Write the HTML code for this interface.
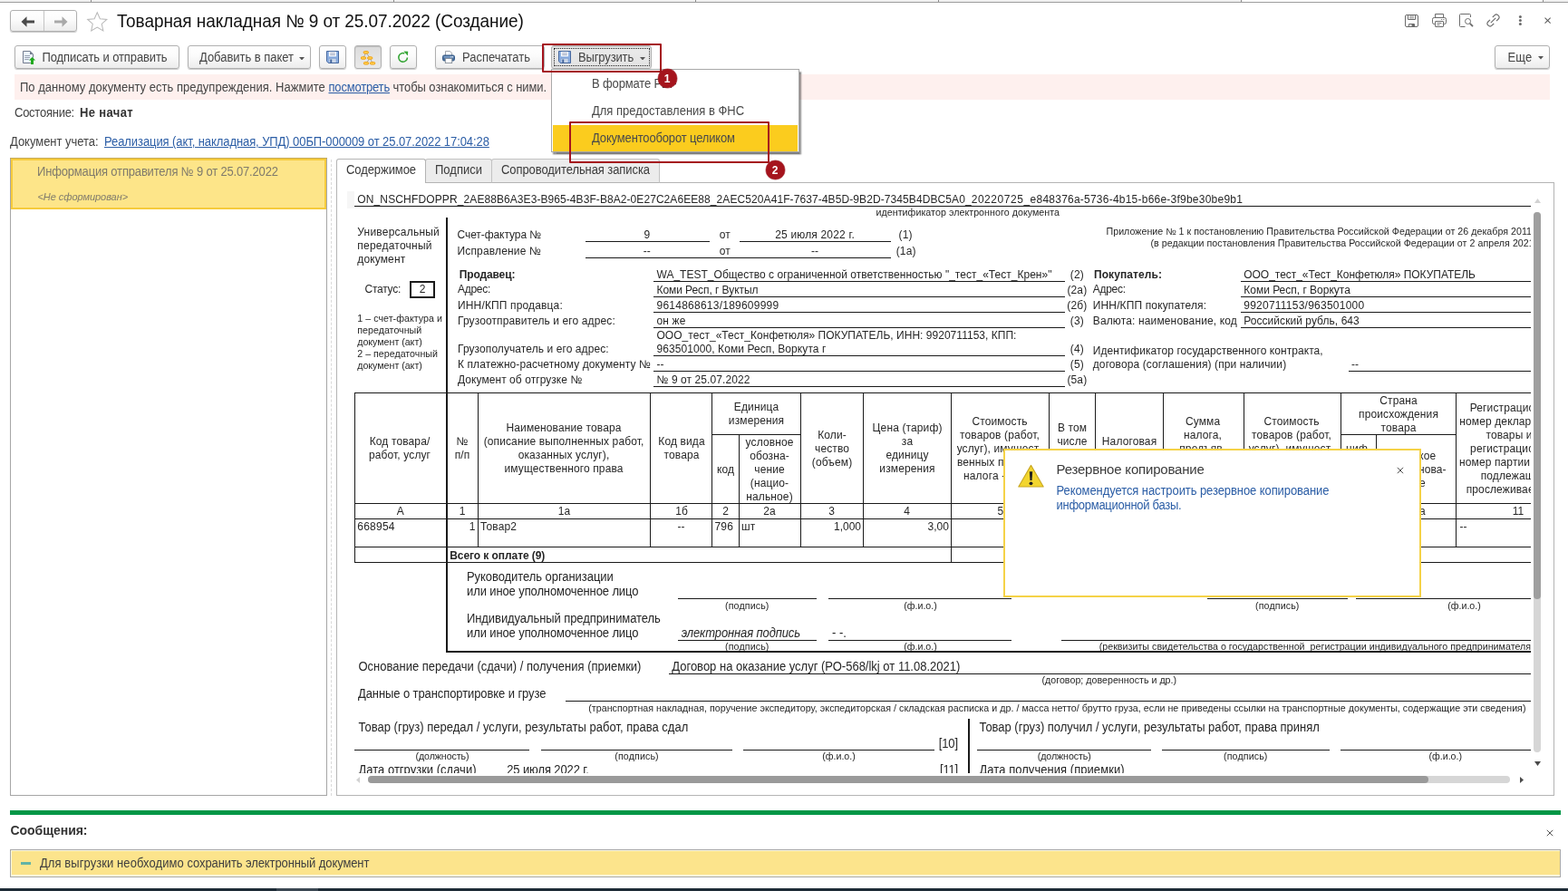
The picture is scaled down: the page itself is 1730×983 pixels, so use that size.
<!DOCTYPE html>
<html lang="ru"><head><meta charset="utf-8">
<title>Товарная накладная № 9 от 25.07.2022 (Создание)</title>
<style>
*{box-sizing:border-box;margin:0;padding:0}
html,body{width:1730px;height:983px;overflow:hidden;background:#fff}
body{position:relative;font-family:"Liberation Sans",sans-serif;font-size:13px;color:#333;-webkit-font-smoothing:antialiased}
div,i,span.t,svg.a,a.t{position:absolute;display:block}
i{font-style:normal}
span.t,a.t{white-space:pre;font-style:normal}

.btn{border:1px solid #b0b0b0;border-radius:3px;background:linear-gradient(#ffffff 0%,#fbfbfb 45%,#ececec 100%);box-shadow:0 1px 1px rgba(0,0,0,.22)}
.btn.on{background:linear-gradient(#dcdcdc,#e9e9e9);box-shadow:inset 0 1px 1px rgba(0,0,0,.15),0 1px 0 rgba(0,0,0,.1)}
.lnk{color:#2c5ea6;text-decoration:underline}
#root{left:0;top:0;width:1730px;height:983px;overflow:hidden;will-change:transform}
#doc{left:391px;top:208px;width:1298px;height:644.5px;overflow:hidden;background:#fff;color:#000}
#doc span.t{color:#262626}

</style></head>
<body>
<div id="root">
<!-- chrome -->
<div style="left:0px;top:0px;width:1730px;height:2px;background:#f1f1f1"></div>
<div style="left:1370px;top:0px;width:332px;height:2px;background:#fff"></div>
<i style="left:0px;top:2px;width:1730px;height:1px;background:#9c9c9c"></i>
<i style="left:100px;top:0px;width:1px;height:2px;background:#8a8a8a"></i>
<i style="left:434px;top:0px;width:1px;height:2px;background:#8a8a8a"></i>
<i style="left:767px;top:0px;width:1px;height:2px;background:#8a8a8a"></i>
<i style="left:1035px;top:0px;width:1px;height:2px;background:#8a8a8a"></i>
<i style="left:1369px;top:0px;width:1px;height:2px;background:#8a8a8a"></i>
<i style="left:1702px;top:0px;width:1px;height:2px;background:#8a8a8a"></i>
<div class="btn" style="left:11px;top:11px;width:74px;height:24px;"></div>
<i style="left:48px;top:12px;width:1px;height:22px;background:#c4c4c4"></i>
<svg class="a" style="left:22.500px;top:17.500px" width="16" height="12" viewBox="0 0 16 12"><path d="M0.5 6L6.5 0.3V4.6H15V7.4H6.5V11.7z" fill="#4a4a4a"/></svg>
<svg class="a" style="left:58.500px;top:17.500px" width="16" height="12" viewBox="0 0 16 12"><path d="M15.5 6L9.5 0.3V4.6H1V7.4H9.5V11.7z" fill="#a9a9a9"/></svg>
<svg class="a" style="left:95px;top:11.500px" width="24.500" height="23.500" viewBox="0 0 26 25"><path d="M13 1.8l3.3 7.4 8 .8-6 5.4 1.7 7.9-7-4.1-7 4.1 1.7-7.9-6-5.400 8-.8z" fill="#fff" stroke="#b9b9b9" stroke-width="1.1" stroke-linejoin="miter"/></svg>
<span class="t" style="letter-spacing:-0.06px;left:129px;top:12px;font-size:19px;line-height:24px;color:#111;transform:scaleY(1.04);transform-origin:0 18px;">Товарная накладная № 9 от 25.07.2022 (Создание)</span>
<!-- toolbar -->
<div class="btn" style="left:16px;top:50px;width:182px;height:26px;"></div>
<svg class="a" style="left:24px;top:55px" width="16" height="17" viewBox="0 0 16 17"><path d="M1.500 1.500h7.700l3.300 3.300v9.700H1.500z" fill="#ebf3fd" stroke="#727b8d" stroke-width="1"/><path d="M9 1.500v3.500h3.500z" fill="#727b8d"/><path d="M3.200 6.500h5.800M3.200 8.500h5.800M3.200 10.500h4.600" stroke="#9099a8" stroke-width=".9"/><path d="M11.500 7.900l3.600 3.500h-2.100v4.600h-3v-4.600h-2.100z" fill="#21a91e" stroke="#ebf7ea" stroke-width=".5" paint-order="stroke"/></svg>
<span class="t" style="letter-spacing:-0.1px;left:46.5px;top:55px;font-size:13px;line-height:17px;color:#454545;transform:scaleY(1.06);transform-origin:0 13px;">Подписать и отправить</span>
<div class="btn" style="left:207px;top:50px;width:136px;height:26px;"></div>
<span class="t" style="letter-spacing:-0.03px;left:220px;top:55px;font-size:13px;line-height:17px;color:#454545;transform:scaleY(1.06);transform-origin:0 13px;">Добавить в пакет</span>
<svg class="a" style="left:329.5px;top:62.5px" width="6" height="3.500" viewBox="0 0 7 4"><path d="M0 0h7L3.5 4z" fill="#555"/></svg>
<div class="btn" style="left:352px;top:50px;width:30px;height:26px;"></div>
<svg class="a" style="left:360px;top:56px" width="14" height="14" viewBox="0 0 14 14"><path d="M0.500 0.500h13v13H2.300L0.500 11.700z" fill="#8db0e2" stroke="#45679e"/><path d="M2.600 7.500h8.800v5.500H2.600z" fill="#7c9fd4"/><rect x="3" y="1" width="8" height="5.300" fill="#fbfdff"/><path d="M4.200 2.600h5.600M4.200 4.500h5.600" stroke="#8c97b6" stroke-width=".9"/><rect x="3.300" y="8.700" width="7.400" height="4.300" fill="#c9d6e8"/><rect x="4.300" y="9.500" width="1.900" height="3.500" fill="#40639a"/></svg>
<div class="btn on" style="left:391px;top:50px;width:30px;height:26px;"></div>
<svg class="a" style="left:398px;top:55.5px" width="17" height="16" viewBox="0 0 17 16"><path d="M5.8 1.8L2.900 8M5.8 1.8L10.200 8M10.200 8L6 13.800M10.200 8L13.100 13.800" stroke="#8f8f8f" stroke-width=".7" fill="none"/><rect x="3.10" y="0.55" width="5.4" height="2.5" rx="1.25" fill="#ffd050" stroke="#f09a00" stroke-width=".85"/><rect x="0.20" y="6.75" width="5.4" height="2.5" rx="1.25" fill="#ffd050" stroke="#f09a00" stroke-width=".85"/><rect x="7.50" y="6.75" width="5.4" height="2.5" rx="1.25" fill="#ffd050" stroke="#f09a00" stroke-width=".85"/><rect x="3.30" y="12.55" width="5.4" height="2.5" rx="1.25" fill="#ffd050" stroke="#f09a00" stroke-width=".85"/><rect x="10.40" y="12.55" width="5.4" height="2.5" rx="1.25" fill="#ffd050" stroke="#f09a00" stroke-width=".85"/></svg>
<div class="btn" style="left:430px;top:50px;width:30px;height:26px;"></div>
<svg class="a" style="left:438px;top:56px" width="14" height="14" viewBox="0 0 14 14"><path d="M11.400 7.400A4.800 4.800 0 1 1 8.300 2.900" fill="none" stroke="#35a535" stroke-width="1.600"/><path d="M7.300 0.600l4.900 0.200-0.300 4.700z" fill="#35a535"/></svg>
<div class="btn" style="left:480px;top:50px;width:121px;height:26px;"></div>
<svg class="a" style="left:488px;top:56px" width="14" height="14" viewBox="0 0 14 14"><path d="M3.5 0.5h5l2 2v3h-7z" fill="#fff" stroke="#8a8f98" stroke-width=".8"/><rect x="0.5" y="5" width="13" height="6" rx="1.6" fill="#49709f" stroke="#365a86"/><rect x="1.6" y="6" width="10.8" height="1.6" fill="#7fa0c8"/><rect x="3.3" y="8.6" width="7.4" height="5" fill="#fff" stroke="#7d8691" stroke-width=".8"/><circle cx="11.2" cy="6.8" r=".7" fill="#fff"/><circle cx="9.4" cy="6.8" r=".6" fill="#dfe8f3"/></svg>
<span class="t" style="left:510px;top:55px;font-size:13px;line-height:17px;color:#454545;transform:scaleY(1.06);transform-origin:0 13px;">Распечатать</span>
<div class="btn on" style="left:608px;top:50px;width:111px;height:26px;background:linear-gradient(#ebebeb,#e2e2e2)"></div>
<div style="left:611px;top:53px;width:106px;height:20px;border:1px dotted #222"></div>
<svg class="a" style="left:616px;top:56px" width="14" height="14" viewBox="0 0 14 14"><path d="M0.500 0.500h13v13H2.300L0.500 11.700z" fill="#8db0e2" stroke="#45679e"/><path d="M2.600 7.500h8.800v5.500H2.600z" fill="#7c9fd4"/><rect x="3" y="1" width="8" height="5.300" fill="#fbfdff"/><path d="M4.200 2.600h5.600M4.200 4.500h5.600" stroke="#8c97b6" stroke-width=".9"/><rect x="3.300" y="8.700" width="7.400" height="4.300" fill="#c9d6e8"/><rect x="4.300" y="9.500" width="1.900" height="3.500" fill="#40639a"/></svg>
<span class="t" style="letter-spacing:-0.14px;left:638px;top:55px;font-size:13px;line-height:17px;color:#454545;transform:scaleY(1.06);transform-origin:0 13px;">Выгрузить</span>
<svg class="a" style="left:706.3px;top:62.8px" width="6" height="3.500" viewBox="0 0 7 4"><path d="M0 0h7L3.5 4z" fill="#555"/></svg>
<div class="btn" style="left:1649px;top:50px;width:61px;height:26px;"></div>
<span class="t" style="letter-spacing:0.18px;left:1663.5px;top:55px;font-size:13px;line-height:17px;color:#454545;transform:scaleY(1.06);transform-origin:0 13px;">Еще</span>
<svg class="a" style="left:1697px;top:62.3px" width="6" height="3.500" viewBox="0 0 7 4"><path d="M0 0h7L3.5 4z" fill="#555"/></svg>
<svg class="a" style="left:1550px;top:16px" width="15" height="14" viewBox="0 0 15 14" fill="none" stroke="#6b6b6b" stroke-width="1"><rect x=".5" y=".5" width="14" height="13" rx="1.500"/><path d="M3.500 .5v5h8v-5"/><path d="M5 2h5M5 3.900h5" stroke-width=".8"/><path d="M4.500 13.500v-3h6v3"/><rect x="7.500" y="11" width="3" height="2.500" fill="#6b6b6b" stroke="none"/></svg>
<svg class="a" style="left:1580px;top:15px" width="16" height="15" viewBox="0 0 16 15" fill="none" stroke="#6b6b6b" stroke-width="1"><path d="M3.500 4.500v-4h9v4"/><rect x=".5" y="4.500" width="15" height="7" rx="1.800"/><rect x="3.500" y="8.500" width="9" height="6" rx=".5" fill="#fff"/><path d="M5.500 10.500h5M5.500 12.500h3" stroke-width=".9"/><path d="M10 6.500h1.200M12.300 6.500h1.200" stroke-width=".9"/></svg>
<svg class="a" style="left:1610px;top:15px" width="16" height="15" viewBox="0 0 16 15" fill="none" stroke="#6b6b6b" stroke-width="1"><path d="M12.500 4v-2.500a1 1 0 0 0-1-1h-10a1 1 0 0 0-1 1v12a1 1 0 0 0 1 1h5"/><circle cx="9.500" cy="8.500" r="3"/><path d="M11.800 10.900l3.200 3.300" stroke-width="1.800"/></svg>
<svg class="a" style="left:1640px;top:15px" width="15" height="15" viewBox="0 0 15 15" fill="none" stroke="#6b6b6b" stroke-width="1.150"><path d="M6.800 4l2.200-2.200a2.700 2.700 0 0 1 3.800 0l.4 .4a2.700 2.700 0 0 1 0 3.800l-2.200 2.200"/><path d="M8.200 11l-2.200 2.200a2.700 2.700 0 0 1-3.800 0l-.4-.4a2.700 2.700 0 0 1 0-3.800l2.200-2.200"/><path d="M4.800 10.200l5.400-5.400"/></svg>
<svg class="a" style="left:1674px;top:16px" width="7" height="13" viewBox="0 0 7 13" fill="#6b6b6b"><circle cx="3.400" cy="2.400" r="1.500"/><circle cx="3.400" cy="6.400" r="1.500"/><circle cx="3.400" cy="10.500" r="1.500"/></svg>
<svg class="a" style="left:1704px;top:18.800px" width="7.200" height="7.200" viewBox="0 0 8 8"><path d="M.6 .6l6.800 6.800M7.400 .6l-6.800 6.800" stroke="#5a5a5a" stroke-width="1.150" fill="none"/></svg>
<div style="left:16px;top:82px;width:1694px;height:27.5px;background:#fef0ee"></div>
<span class="t" style="letter-spacing:0.02px;left:22px;top:88px;font-size:13px;line-height:17px;color:#454545;transform:scaleY(1.06);transform-origin:0 13px;">По данному документу есть предупреждения. Нажмите </span>
<span class="t" style="letter-spacing:-0.19px;left:362.5px;top:88px;font-size:13px;line-height:17px;transform:scaleY(1.06);transform-origin:0 13px;"><span class="lnk">посмотреть</span></span>
<span class="t" style="letter-spacing:-0.06px;left:433.5px;top:88px;font-size:13px;line-height:17px;color:#454545;transform:scaleY(1.06);transform-origin:0 13px;">чтобы ознакомиться с ними.</span>
<span class="t" style="letter-spacing:-0.25px;left:16px;top:116px;font-size:13px;line-height:17px;color:#444;transform:scaleY(1.06);transform-origin:0 13px;">Состояние:</span>
<span class="t" style="letter-spacing:0.36px;left:88px;top:116px;font-size:13px;line-height:17px;font-weight:bold;color:#333;transform:scaleY(1.06);transform-origin:0 13px;">Не начат</span>
<span class="t" style="letter-spacing:-0.03px;left:11px;top:148px;font-size:13px;line-height:17px;color:#444;transform:scaleY(1.06);transform-origin:0 13px;">Документ учета:</span>
<span class="t" style="letter-spacing:-0.08px;left:115px;top:148px;font-size:13px;line-height:17px;transform:scaleY(1.06);transform-origin:0 13px;"><span class="lnk">Реализация (акт, накладная, УПД) 00БП-000009 от 25.07.2022 17:04:28</span></span>
<!-- panels -->
<div style="left:11px;top:174px;width:350px;height:704px;border:1px solid #a6a6a6;background:#fff"></div>
<div style="left:12px;top:175px;width:348px;height:55.5px;background:#fde589;border:2px solid #f6cb3c"></div>
<i style="left:11px;top:174px;width:350px;height:1px;background:#c6aa55"></i>
<span class="t" style="letter-spacing:-0.17px;left:41px;top:181px;font-size:13px;line-height:17px;color:#807b6c;transform:scaleY(1.06);transform-origin:0 13px;">Информация отправителя № 9 от 25.07.2022</span>
<span class="t" style="letter-spacing:-0.06px;left:41.5px;top:210px;font-size:11px;line-height:14px;font-style:italic;color:#807b6c;">&lt;Не сформирован&gt;</span>
<div style="left:365px;top:176px;width:1px;height:702px;border-left:1px dashed #d9d9d9"></div>
<div style="left:371px;top:201px;width:1344px;height:677px;border:1px solid #b4b4b4;background:#fff"></div>
<div style="left:469px;top:175px;width:74px;height:27px;border:1px solid #c3c3c3;border-bottom-color:#b4b4b4;border-radius:3px 3px 0 0;background:#ececec"></div>
<div style="left:542px;top:175px;width:186px;height:27px;border:1px solid #c3c3c3;border-bottom-color:#b4b4b4;border-radius:3px 3px 0 0;background:#ececec"></div>
<div style="left:371px;top:175px;width:99px;height:27px;border:1px solid #b4b4b4;border-bottom:none;border-radius:3px 3px 0 0;background:#fff"></div>
<span class="t" style="letter-spacing:-0.07px;left:382px;top:179px;font-size:13px;line-height:17px;color:#3b3b3b;transform:scaleY(1.06);transform-origin:0 13px;">Содержимое</span>
<span class="t" style="letter-spacing:0.009px;left:480px;top:179px;font-size:13px;line-height:17px;color:#3b3b3b;transform:scaleY(1.06);transform-origin:0 13px;">Подписи</span>
<span class="t" style="letter-spacing:-0.08px;left:553px;top:179px;font-size:13px;line-height:17px;color:#3b3b3b;transform:scaleY(1.06);transform-origin:0 13px;">Сопроводительная записка</span>
<div style="left:383px;top:211px;width:11px;height:19px;background:#f6f6f6"></div>
<svg class="a" style="left:1693px;top:219px" width="7" height="5" viewBox="0 0 7 5"><path d="M0 5h7L3.500 0z" fill="#d2d2d2"/></svg>
<div style="left:1692px;top:233.5px;width:8px;height:596px;background:#d6d6d6;border-radius:4px"></div>
<div style="left:1692px;top:233.5px;width:8px;height:427px;background:#9f9f9f;border-radius:4px"></div>
<svg class="a" style="left:1693px;top:839.500px" width="7" height="5" viewBox="0 0 7 5"><path d="M0 0h7L3.500 5z" fill="#4a4a4a"/></svg>
<svg class="a" style="left:392.500px;top:856.500px" width="4" height="7" viewBox="0 0 4 7"><path d="M4 0v7L0 3.500z" fill="#d2d2d2"/></svg>
<div style="left:405.5px;top:856px;width:1260.5px;height:8px;background:#d6d6d6;border-radius:4px"></div>
<div style="left:405.5px;top:856px;width:1170.5px;height:8px;background:#9a9a9a;border-radius:4px"></div>
<svg class="a" style="left:1676.500px;top:856.500px" width="4" height="7" viewBox="0 0 4 7"><path d="M0 0v7l4-3.500z" fill="#4a4a4a"/></svg>
<!-- doc -->
<div id="doc"><div style="left:-391px;top:-208px;width:1730px;height:983px">
<span class="t" style="left:394.25px;top:213px;font-size:12px;line-height:15px;transform:scaleY(1.04);transform-origin:0 11px;"><span style="letter-spacing:0.14px">ON_NSCHFDOPPR_</span><span style="letter-spacing:0.07px">2AE88B6A3E3-B965-4B3F-B8A2-0E27C2A6EE88_</span><span style="letter-spacing:0.09px">2AEC520A41F-7637-4B5D-9B2D-7345B4DBC5A0_</span><span style="letter-spacing:0.54px">20220725_</span><span style="letter-spacing:0.23px">e848376a-5736-4b15-b66e-3f9be30be9b1</span></span>
<i style="left:391px;top:227px;width:1298px;height:1px;background:#1a1a1a"></i>
<span class="t" style="letter-spacing:0.05px;left:767.77px;width:600px;text-align:center;top:226.5px;font-size:10.67px;line-height:15px;transform:scaleY(0.95);transform-origin:50% 11px;">идентификатор электронного документа</span>
<span class="t" style="letter-spacing:0.02px;left:1220.5px;top:248px;font-size:10.67px;line-height:15px;transform:scaleY(0.95);transform-origin:0 11px;">Приложение № 1 к постановлению Правительства Российской Федерации от 26 декабря 2011</span>
<span class="t" style="letter-spacing:0.04px;left:1269.5px;top:261px;font-size:10.67px;line-height:15px;transform:scaleY(0.95);transform-origin:0 11px;">(в редакции постановления Правительства Российской Федерации от 2 апреля 2021</span>
<span class="t" style="letter-spacing:0.22px;left:394.25px;top:249px;font-size:12px;line-height:15px;transform:scaleY(1.04);transform-origin:0 11px;">Универсальный</span>
<span class="t" style="letter-spacing:0.24px;left:394.25px;top:264px;font-size:12px;line-height:15px;transform:scaleY(1.04);transform-origin:0 11px;">передаточный</span>
<span class="t" style="letter-spacing:0.13px;left:394.25px;top:279px;font-size:12px;line-height:15px;transform:scaleY(1.04);transform-origin:0 11px;">документ</span>
<span class="t" style="letter-spacing:-0.25px;left:402.5px;top:312px;font-size:12px;line-height:15px;transform:scaleY(1.04);transform-origin:0 11px;">Статус:</span>
<div style="left:452px;top:310px;width:28px;height:19px;border:2px solid #1a1a1a"></div>
<span class="t" style="letter-spacing:0.12px;left:166.06px;width:600px;text-align:center;top:312px;font-size:12px;line-height:15px;transform:scaleY(1.04);transform-origin:50% 11px;">2</span>
<span class="t" style="letter-spacing:0.04px;left:394.25px;top:344px;font-size:10.67px;line-height:15px;transform:scaleY(0.95);transform-origin:0 11px;">1 – счет-фактура и</span>
<span class="t" style="letter-spacing:0.02px;left:394.25px;top:357px;font-size:10.67px;line-height:15px;transform:scaleY(0.95);transform-origin:0 11px;">передаточный</span>
<span class="t" style="letter-spacing:-0.02px;left:394.25px;top:370px;font-size:10.67px;line-height:15px;transform:scaleY(0.95);transform-origin:0 11px;">документ (акт)</span>
<span class="t" style="letter-spacing:0.01px;left:394.25px;top:383px;font-size:10.67px;line-height:15px;transform:scaleY(0.95);transform-origin:0 11px;">2 – передаточный</span>
<span class="t" style="letter-spacing:-0.02px;left:394.25px;top:396px;font-size:10.67px;line-height:15px;transform:scaleY(0.95);transform-origin:0 11px;">документ (акт)</span>
<i style="left:492px;top:240px;width:2px;height:480px;background:#1a1a1a"></i>
<i style="left:492px;top:718px;width:1197px;height:2px;background:#1a1a1a"></i>
<span class="t" style="letter-spacing:-0.07px;left:504.5px;top:251.5px;font-size:12px;line-height:15px;transform:scaleY(1.04);transform-origin:0 11px;">Счет-фактура №</span>
<span class="t" style="letter-spacing:0.16px;left:504.5px;top:270px;font-size:12px;line-height:15px;transform:scaleY(1.04);transform-origin:0 11px;">Исправление №</span>
<i style="left:646px;top:266px;width:136.5px;height:1px;background:#1a1a1a"></i>
<i style="left:816px;top:266px;width:167px;height:1px;background:#1a1a1a"></i>
<i style="left:646px;top:284px;width:337px;height:1px;background:#1a1a1a"></i>
<span class="t" style="letter-spacing:0.12px;left:413.81px;width:600px;text-align:center;top:251.5px;font-size:12px;line-height:15px;transform:scaleY(1.04);transform-origin:50% 11px;">9</span>
<span class="t" style="letter-spacing:0.12px;left:413.81px;width:600px;text-align:center;top:270px;font-size:12px;line-height:15px;transform:scaleY(1.04);transform-origin:50% 11px;">--</span>
<span class="t" style="letter-spacing:0.12px;left:793.75px;top:251.5px;font-size:12px;line-height:15px;transform:scaleY(1.04);transform-origin:0 11px;">от</span>
<span class="t" style="letter-spacing:0.12px;left:793.75px;top:270px;font-size:12px;line-height:15px;transform:scaleY(1.04);transform-origin:0 11px;">от</span>
<span class="t" style="letter-spacing:0.17px;left:599.08px;width:600px;text-align:center;top:251.5px;font-size:12px;line-height:15px;transform:scaleY(1.04);transform-origin:50% 11px;">25 июля 2022 г.</span>
<span class="t" style="letter-spacing:0.12px;left:599.06px;width:600px;text-align:center;top:270px;font-size:12px;line-height:15px;transform:scaleY(1.04);transform-origin:50% 11px;">--</span>
<span class="t" style="letter-spacing:0.12px;left:699.06px;width:600px;text-align:center;top:251.5px;font-size:12px;line-height:15px;transform:scaleY(1.04);transform-origin:50% 11px;">(1)</span>
<span class="t" style="letter-spacing:0.12px;left:699.66px;width:600px;text-align:center;top:270px;font-size:12px;line-height:15px;transform:scaleY(1.04);transform-origin:50% 11px;">(1а)</span>
<span class="t" style="letter-spacing:-0.13px;left:506.75px;top:296px;font-size:12px;line-height:15px;font-weight:bold;transform:scaleY(1.04);transform-origin:0 11px;">Продавец:</span>
<span class="t" style="letter-spacing:-0.28px;left:505px;top:312px;font-size:12px;line-height:15px;transform:scaleY(1.04);transform-origin:0 11px;">Адрес:</span>
<span class="t" style="letter-spacing:0.15px;left:505px;top:330px;font-size:12px;line-height:15px;transform:scaleY(1.04);transform-origin:0 11px;">ИНН/КПП продавца:</span>
<span class="t" style="letter-spacing:0.11px;left:505px;top:347px;font-size:12px;line-height:15px;transform:scaleY(1.04);transform-origin:0 11px;">Грузоотправитель и его адрес:</span>
<span class="t" style="letter-spacing:0.08px;left:505px;top:378px;font-size:12px;line-height:15px;transform:scaleY(1.04);transform-origin:0 11px;">Грузополучатель и его адрес:</span>
<span class="t" style="letter-spacing:0.09px;left:505px;top:395px;font-size:12px;line-height:15px;transform:scaleY(1.04);transform-origin:0 11px;">К платежно-расчетному документу №</span>
<span class="t" style="letter-spacing:0.06px;left:505px;top:412px;font-size:12px;line-height:15px;transform:scaleY(1.04);transform-origin:0 11px;">Документ об отгрузке №</span>
<span class="t" style="letter-spacing:0.02px;left:724.5px;top:296px;font-size:12px;line-height:15px;transform:scaleY(1.04);transform-origin:0 11px;">WA_TEST_Общество с ограниченной ответственностью "_тест_«Тест_Крен»"</span>
<span class="t" style="letter-spacing:-0.07px;left:724.5px;top:313px;font-size:12px;line-height:15px;transform:scaleY(1.04);transform-origin:0 11px;">Коми Респ, г Вуктыл</span>
<span class="t" style="letter-spacing:0.24px;left:724.5px;top:330px;font-size:12px;line-height:15px;transform:scaleY(1.04);transform-origin:0 11px;">9614868613/189609999</span>
<span class="t" style="letter-spacing:0.12px;left:724.5px;top:347px;font-size:12px;line-height:15px;transform:scaleY(1.04);transform-origin:0 11px;">он же</span>
<span class="t" style="letter-spacing:0.03px;left:724.5px;top:363px;font-size:12px;line-height:15px;transform:scaleY(1.04);transform-origin:0 11px;">ООО_тест_«Тест_Конфетюля» ПОКУПАТЕЛЬ, ИНН: 9920711153, КПП:</span>
<span class="t" style="letter-spacing:0.08px;left:724.5px;top:378px;font-size:12px;line-height:15px;transform:scaleY(1.04);transform-origin:0 11px;">963501000, Коми Респ, Воркута г</span>
<span class="t" style="letter-spacing:0.12px;left:724.5px;top:395px;font-size:12px;line-height:15px;transform:scaleY(1.04);transform-origin:0 11px;">--</span>
<span class="t" style="letter-spacing:0.09px;left:724.5px;top:412px;font-size:12px;line-height:15px;transform:scaleY(1.04);transform-origin:0 11px;">№ 9 от 25.07.2022</span>
<i style="left:721px;top:310px;width:453.5px;height:1px;background:#1a1a1a"></i>
<i style="left:721px;top:327px;width:453.5px;height:1px;background:#1a1a1a"></i>
<i style="left:721px;top:344px;width:453.5px;height:1px;background:#1a1a1a"></i>
<i style="left:721px;top:361px;width:453.5px;height:1px;background:#1a1a1a"></i>
<i style="left:721px;top:392px;width:453.5px;height:1px;background:#1a1a1a"></i>
<i style="left:721px;top:409px;width:453.5px;height:1px;background:#1a1a1a"></i>
<i style="left:721px;top:426px;width:453.5px;height:1px;background:#1a1a1a"></i>
<span class="t" style="letter-spacing:0.12px;left:888.36px;width:600px;text-align:center;top:296px;font-size:12px;line-height:15px;transform:scaleY(1.04);transform-origin:50% 11px;">(2)</span>
<span class="t" style="letter-spacing:0.12px;left:888.36px;width:600px;text-align:center;top:313px;font-size:12px;line-height:15px;transform:scaleY(1.04);transform-origin:50% 11px;">(2а)</span>
<span class="t" style="letter-spacing:0.12px;left:888.36px;width:600px;text-align:center;top:330px;font-size:12px;line-height:15px;transform:scaleY(1.04);transform-origin:50% 11px;">(2б)</span>
<span class="t" style="letter-spacing:0.12px;left:888.36px;width:600px;text-align:center;top:347px;font-size:12px;line-height:15px;transform:scaleY(1.04);transform-origin:50% 11px;">(3)</span>
<span class="t" style="letter-spacing:0.12px;left:888.36px;width:600px;text-align:center;top:378px;font-size:12px;line-height:15px;transform:scaleY(1.04);transform-origin:50% 11px;">(4)</span>
<span class="t" style="letter-spacing:0.12px;left:888.36px;width:600px;text-align:center;top:395px;font-size:12px;line-height:15px;transform:scaleY(1.04);transform-origin:50% 11px;">(5)</span>
<span class="t" style="letter-spacing:0.12px;left:888.36px;width:600px;text-align:center;top:412px;font-size:12px;line-height:15px;transform:scaleY(1.04);transform-origin:50% 11px;">(5а)</span>
<span class="t" style="letter-spacing:0.08px;left:1207px;top:296px;font-size:12px;line-height:15px;font-weight:bold;transform:scaleY(1.04);transform-origin:0 11px;">Покупатель:</span>
<span class="t" style="letter-spacing:-0.28px;left:1205.75px;top:312px;font-size:12px;line-height:15px;transform:scaleY(1.04);transform-origin:0 11px;">Адрес:</span>
<span class="t" style="letter-spacing:0.14px;left:1205.75px;top:330px;font-size:12px;line-height:15px;transform:scaleY(1.04);transform-origin:0 11px;">ИНН/КПП покупателя:</span>
<span class="t" style="letter-spacing:0.14px;left:1205.75px;top:347px;font-size:12px;line-height:15px;transform:scaleY(1.04);transform-origin:0 11px;">Валюта: наименование, код</span>
<span class="t" style="letter-spacing:0.07px;left:1205.75px;top:379.5px;font-size:12px;line-height:15px;transform:scaleY(1.04);transform-origin:0 11px;">Идентификатор государственного контракта,</span>
<span class="t" style="letter-spacing:0.1px;left:1205.75px;top:395px;font-size:12px;line-height:15px;transform:scaleY(1.04);transform-origin:0 11px;">договора (соглашения) (при наличии)</span>
<span class="t" style="letter-spacing:-0.03px;left:1372.25px;top:296px;font-size:12px;line-height:15px;transform:scaleY(1.04);transform-origin:0 11px;">ООО_тест_«Тест_Конфетюля» ПОКУПАТЕЛЬ</span>
<span class="t" style="letter-spacing:-0.01px;left:1372.25px;top:313px;font-size:12px;line-height:15px;transform:scaleY(1.04);transform-origin:0 11px;">Коми Респ, г Воркута</span>
<span class="t" style="letter-spacing:0.24px;left:1372.25px;top:330px;font-size:12px;line-height:15px;transform:scaleY(1.04);transform-origin:0 11px;">9920711153/963501000</span>
<span class="t" style="letter-spacing:0.05px;left:1372.25px;top:347px;font-size:12px;line-height:15px;transform:scaleY(1.04);transform-origin:0 11px;">Российский рубль, 643</span>
<span class="t" style="letter-spacing:0.12px;left:1491px;top:395px;font-size:12px;line-height:15px;transform:scaleY(1.04);transform-origin:0 11px;">--</span>
<i style="left:1369px;top:310px;width:320px;height:1px;background:#1a1a1a"></i>
<i style="left:1369px;top:327px;width:320px;height:1px;background:#1a1a1a"></i>
<i style="left:1369px;top:344px;width:320px;height:1px;background:#1a1a1a"></i>
<i style="left:1369px;top:361px;width:320px;height:1px;background:#1a1a1a"></i>
<i style="left:1488px;top:409px;width:201px;height:1px;background:#1a1a1a"></i>
<i style="left:391px;top:433px;width:1298px;height:1px;background:#1a1a1a"></i>
<i style="left:391px;top:555px;width:1298px;height:1px;background:#1a1a1a"></i>
<i style="left:391px;top:572px;width:1298px;height:1px;background:#1a1a1a"></i>
<i style="left:391px;top:603px;width:1298px;height:1px;background:#1a1a1a"></i>
<i style="left:391px;top:620px;width:1298px;height:1px;background:#1a1a1a"></i>
<i style="left:391px;top:433px;width:1px;height:187px;background:#1a1a1a"></i>
<i style="left:527px;top:433px;width:1px;height:170px;background:#1a1a1a"></i>
<i style="left:717px;top:433px;width:1px;height:170px;background:#1a1a1a"></i>
<i style="left:785px;top:433px;width:1px;height:170px;background:#1a1a1a"></i>
<i style="left:883px;top:433px;width:1px;height:170px;background:#1a1a1a"></i>
<i style="left:952px;top:433px;width:1px;height:170px;background:#1a1a1a"></i>
<i style="left:1157px;top:433px;width:1px;height:170px;background:#1a1a1a"></i>
<i style="left:1208px;top:433px;width:1px;height:170px;background:#1a1a1a"></i>
<i style="left:1283px;top:433px;width:1px;height:170px;background:#1a1a1a"></i>
<i style="left:1372px;top:433px;width:1px;height:170px;background:#1a1a1a"></i>
<i style="left:1479px;top:433px;width:1px;height:170px;background:#1a1a1a"></i>
<i style="left:1606px;top:433px;width:1px;height:170px;background:#1a1a1a"></i>
<i style="left:1049px;top:433px;width:1px;height:187px;background:#1a1a1a"></i>
<i style="left:1157px;top:603px;width:1px;height:17px;background:#1a1a1a"></i>
<i style="left:1283px;top:603px;width:1px;height:17px;background:#1a1a1a"></i>
<i style="left:1372px;top:603px;width:1px;height:17px;background:#1a1a1a"></i>
<i style="left:1479px;top:603px;width:1px;height:17px;background:#1a1a1a"></i>
<i style="left:815px;top:479px;width:1px;height:124px;background:#1a1a1a"></i>
<i style="left:1518px;top:479px;width:1px;height:124px;background:#1a1a1a"></i>
<i style="left:785px;top:479px;width:99px;height:1px;background:#1a1a1a"></i>
<i style="left:1479px;top:479px;width:128px;height:1px;background:#1a1a1a"></i>
<span class="t" style="letter-spacing:0.12px;left:141.06px;width:600px;text-align:center;top:480px;font-size:12px;line-height:15px;transform:scaleY(1.04);transform-origin:50% 11px;">Код товара/</span>
<span class="t" style="letter-spacing:0.12px;left:141.06px;width:600px;text-align:center;top:495px;font-size:12px;line-height:15px;transform:scaleY(1.04);transform-origin:50% 11px;">работ, услуг</span>
<span class="t" style="letter-spacing:0.12px;left:210.06px;width:600px;text-align:center;top:480px;font-size:12px;line-height:15px;transform:scaleY(1.04);transform-origin:50% 11px;">№</span>
<span class="t" style="letter-spacing:0.12px;left:210.06px;width:600px;text-align:center;top:495px;font-size:12px;line-height:15px;transform:scaleY(1.04);transform-origin:50% 11px;">п/п</span>
<span class="t" style="letter-spacing:0.12px;left:322.06px;width:600px;text-align:center;top:465px;font-size:12px;line-height:15px;transform:scaleY(1.04);transform-origin:50% 11px;">Наименование товара</span>
<span class="t" style="letter-spacing:0.12px;left:322.06px;width:600px;text-align:center;top:480px;font-size:12px;line-height:15px;transform:scaleY(1.04);transform-origin:50% 11px;">(описание выполненных работ,</span>
<span class="t" style="letter-spacing:0.12px;left:322.06px;width:600px;text-align:center;top:495px;font-size:12px;line-height:15px;transform:scaleY(1.04);transform-origin:50% 11px;">оказанных услуг),</span>
<span class="t" style="letter-spacing:0.12px;left:322.06px;width:600px;text-align:center;top:510px;font-size:12px;line-height:15px;transform:scaleY(1.04);transform-origin:50% 11px;">имущественного права</span>
<span class="t" style="letter-spacing:0.12px;left:452.06px;width:600px;text-align:center;top:480px;font-size:12px;line-height:15px;transform:scaleY(1.04);transform-origin:50% 11px;">Код вида</span>
<span class="t" style="letter-spacing:0.12px;left:452.06px;width:600px;text-align:center;top:495px;font-size:12px;line-height:15px;transform:scaleY(1.04);transform-origin:50% 11px;">товара</span>
<span class="t" style="letter-spacing:0.12px;left:534.56px;width:600px;text-align:center;top:442px;font-size:12px;line-height:15px;transform:scaleY(1.04);transform-origin:50% 11px;">Единица</span>
<span class="t" style="letter-spacing:0.12px;left:534.56px;width:600px;text-align:center;top:457px;font-size:12px;line-height:15px;transform:scaleY(1.04);transform-origin:50% 11px;">измерения</span>
<span class="t" style="letter-spacing:0.12px;left:500.56px;width:600px;text-align:center;top:511px;font-size:12px;line-height:15px;transform:scaleY(1.04);transform-origin:50% 11px;">код</span>
<span class="t" style="letter-spacing:0.12px;left:549.06px;width:600px;text-align:center;top:481px;font-size:12px;line-height:15px;transform:scaleY(1.04);transform-origin:50% 11px;">условное</span>
<span class="t" style="letter-spacing:0.12px;left:549.06px;width:600px;text-align:center;top:496px;font-size:12px;line-height:15px;transform:scaleY(1.04);transform-origin:50% 11px;">обозна-</span>
<span class="t" style="letter-spacing:0.12px;left:549.06px;width:600px;text-align:center;top:511px;font-size:12px;line-height:15px;transform:scaleY(1.04);transform-origin:50% 11px;">чение</span>
<span class="t" style="letter-spacing:0.12px;left:549.06px;width:600px;text-align:center;top:526px;font-size:12px;line-height:15px;transform:scaleY(1.04);transform-origin:50% 11px;">(нацио-</span>
<span class="t" style="letter-spacing:0.12px;left:549.06px;width:600px;text-align:center;top:541px;font-size:12px;line-height:15px;transform:scaleY(1.04);transform-origin:50% 11px;">нальное)</span>
<span class="t" style="letter-spacing:0.12px;left:618.06px;width:600px;text-align:center;top:473px;font-size:12px;line-height:15px;transform:scaleY(1.04);transform-origin:50% 11px;">Коли-</span>
<span class="t" style="letter-spacing:0.12px;left:618.06px;width:600px;text-align:center;top:488px;font-size:12px;line-height:15px;transform:scaleY(1.04);transform-origin:50% 11px;">чество</span>
<span class="t" style="letter-spacing:0.12px;left:618.06px;width:600px;text-align:center;top:503px;font-size:12px;line-height:15px;transform:scaleY(1.04);transform-origin:50% 11px;">(объем)</span>
<span class="t" style="letter-spacing:0.12px;left:701.06px;width:600px;text-align:center;top:465px;font-size:12px;line-height:15px;transform:scaleY(1.04);transform-origin:50% 11px;">Цена (тариф)</span>
<span class="t" style="letter-spacing:0.12px;left:701.06px;width:600px;text-align:center;top:480px;font-size:12px;line-height:15px;transform:scaleY(1.04);transform-origin:50% 11px;">за</span>
<span class="t" style="letter-spacing:0.12px;left:701.06px;width:600px;text-align:center;top:495px;font-size:12px;line-height:15px;transform:scaleY(1.04);transform-origin:50% 11px;">единицу</span>
<span class="t" style="letter-spacing:0.12px;left:701.06px;width:600px;text-align:center;top:510px;font-size:12px;line-height:15px;transform:scaleY(1.04);transform-origin:50% 11px;">измерения</span>
<span class="t" style="letter-spacing:0.12px;left:803.06px;width:600px;text-align:center;top:458px;font-size:12px;line-height:15px;transform:scaleY(1.04);transform-origin:50% 11px;">Стоимость</span>
<span class="t" style="letter-spacing:0.12px;left:803.06px;width:600px;text-align:center;top:473px;font-size:12px;line-height:15px;transform:scaleY(1.04);transform-origin:50% 11px;">товаров (работ,</span>
<span class="t" style="letter-spacing:0.12px;left:803.06px;width:600px;text-align:center;top:488px;font-size:12px;line-height:15px;transform:scaleY(1.04);transform-origin:50% 11px;">услуг), имущест-</span>
<span class="t" style="letter-spacing:0.12px;left:803.06px;width:600px;text-align:center;top:503px;font-size:12px;line-height:15px;transform:scaleY(1.04);transform-origin:50% 11px;">венных прав без</span>
<span class="t" style="letter-spacing:0.12px;left:803.06px;width:600px;text-align:center;top:518px;font-size:12px;line-height:15px;transform:scaleY(1.04);transform-origin:50% 11px;">налога - всего</span>
<span class="t" style="letter-spacing:0.12px;left:883.06px;width:600px;text-align:center;top:465px;font-size:12px;line-height:15px;transform:scaleY(1.04);transform-origin:50% 11px;">В том</span>
<span class="t" style="letter-spacing:0.12px;left:883.06px;width:600px;text-align:center;top:480px;font-size:12px;line-height:15px;transform:scaleY(1.04);transform-origin:50% 11px;">числе</span>
<span class="t" style="letter-spacing:0.12px;left:946.06px;width:600px;text-align:center;top:480px;font-size:12px;line-height:15px;transform:scaleY(1.04);transform-origin:50% 11px;">Налоговая</span>
<span class="t" style="letter-spacing:0.12px;left:1027.06px;width:600px;text-align:center;top:458px;font-size:12px;line-height:15px;transform:scaleY(1.04);transform-origin:50% 11px;">Сумма</span>
<span class="t" style="letter-spacing:0.12px;left:1027.06px;width:600px;text-align:center;top:473px;font-size:12px;line-height:15px;transform:scaleY(1.04);transform-origin:50% 11px;">налога,</span>
<span class="t" style="letter-spacing:0.12px;left:1027.06px;width:600px;text-align:center;top:488px;font-size:12px;line-height:15px;transform:scaleY(1.04);transform-origin:50% 11px;">предъяв-</span>
<span class="t" style="letter-spacing:0.12px;left:1125.06px;width:600px;text-align:center;top:458px;font-size:12px;line-height:15px;transform:scaleY(1.04);transform-origin:50% 11px;">Стоимость</span>
<span class="t" style="letter-spacing:0.12px;left:1125.06px;width:600px;text-align:center;top:473px;font-size:12px;line-height:15px;transform:scaleY(1.04);transform-origin:50% 11px;">товаров (работ,</span>
<span class="t" style="letter-spacing:0.12px;left:1125.06px;width:600px;text-align:center;top:488px;font-size:12px;line-height:15px;transform:scaleY(1.04);transform-origin:50% 11px;">услуг), имущест-</span>
<span class="t" style="letter-spacing:0.12px;left:1243.06px;width:600px;text-align:center;top:435px;font-size:12px;line-height:15px;transform:scaleY(1.04);transform-origin:50% 11px;">Страна</span>
<span class="t" style="letter-spacing:0.12px;left:1243.06px;width:600px;text-align:center;top:450px;font-size:12px;line-height:15px;transform:scaleY(1.04);transform-origin:50% 11px;">происхождения</span>
<span class="t" style="letter-spacing:0.12px;left:1243.06px;width:600px;text-align:center;top:465px;font-size:12px;line-height:15px;transform:scaleY(1.04);transform-origin:50% 11px;">товара</span>
<span class="t" style="letter-spacing:0.12px;left:1199.06px;width:600px;text-align:center;top:488px;font-size:12px;line-height:15px;transform:scaleY(1.04);transform-origin:50% 11px;">циф-</span>
<span class="t" style="letter-spacing:0.12px;left:1262.56px;width:600px;text-align:center;top:496px;font-size:12px;line-height:15px;transform:scaleY(1.04);transform-origin:50% 11px;">краткое</span>
<span class="t" style="letter-spacing:0.12px;left:1262.56px;width:600px;text-align:center;top:511px;font-size:12px;line-height:15px;transform:scaleY(1.04);transform-origin:50% 11px;">наименова-</span>
<span class="t" style="letter-spacing:0.12px;left:1262.56px;width:600px;text-align:center;top:526px;font-size:12px;line-height:15px;transform:scaleY(1.04);transform-origin:50% 11px;">ние</span>
<span class="t" style="letter-spacing:0.12px;left:1372.06px;width:600px;text-align:center;top:443px;font-size:12px;line-height:15px;transform:scaleY(1.04);transform-origin:50% 11px;">Регистрационный</span>
<span class="t" style="letter-spacing:0.12px;left:1372.06px;width:600px;text-align:center;top:458px;font-size:12px;line-height:15px;transform:scaleY(1.04);transform-origin:50% 11px;">номер декларации на</span>
<span class="t" style="letter-spacing:0.12px;left:1372.06px;width:600px;text-align:center;top:473px;font-size:12px;line-height:15px;transform:scaleY(1.04);transform-origin:50% 11px;">товары или</span>
<span class="t" style="letter-spacing:0.12px;left:1372.06px;width:600px;text-align:center;top:488px;font-size:12px;line-height:15px;transform:scaleY(1.04);transform-origin:50% 11px;">регистрационный</span>
<span class="t" style="letter-spacing:0.12px;left:1372.06px;width:600px;text-align:center;top:503px;font-size:12px;line-height:15px;transform:scaleY(1.04);transform-origin:50% 11px;">номер партии товара,</span>
<span class="t" style="letter-spacing:0.12px;left:1372.06px;width:600px;text-align:center;top:518px;font-size:12px;line-height:15px;transform:scaleY(1.04);transform-origin:50% 11px;">подлежащего</span>
<span class="t" style="letter-spacing:0.12px;left:1372.06px;width:600px;text-align:center;top:533px;font-size:12px;line-height:15px;transform:scaleY(1.04);transform-origin:50% 11px;">прослеживаемости</span>
<span class="t" style="letter-spacing:0.12px;left:141.81px;width:600px;text-align:center;top:557px;font-size:12px;line-height:15px;transform:scaleY(1.04);transform-origin:50% 11px;">А</span>
<span class="t" style="letter-spacing:0.12px;left:210.06px;width:600px;text-align:center;top:557px;font-size:12px;line-height:15px;transform:scaleY(1.04);transform-origin:50% 11px;">1</span>
<span class="t" style="letter-spacing:0.12px;left:322.56px;width:600px;text-align:center;top:557px;font-size:12px;line-height:15px;transform:scaleY(1.04);transform-origin:50% 11px;">1а</span>
<span class="t" style="letter-spacing:0.12px;left:452.06px;width:600px;text-align:center;top:557px;font-size:12px;line-height:15px;transform:scaleY(1.04);transform-origin:50% 11px;">1б</span>
<span class="t" style="letter-spacing:0.12px;left:500.56px;width:600px;text-align:center;top:557px;font-size:12px;line-height:15px;transform:scaleY(1.04);transform-origin:50% 11px;">2</span>
<span class="t" style="letter-spacing:0.12px;left:549.06px;width:600px;text-align:center;top:557px;font-size:12px;line-height:15px;transform:scaleY(1.04);transform-origin:50% 11px;">2а</span>
<span class="t" style="letter-spacing:0.12px;left:617.56px;width:600px;text-align:center;top:557px;font-size:12px;line-height:15px;transform:scaleY(1.04);transform-origin:50% 11px;">3</span>
<span class="t" style="letter-spacing:0.12px;left:700.56px;width:600px;text-align:center;top:557px;font-size:12px;line-height:15px;transform:scaleY(1.04);transform-origin:50% 11px;">4</span>
<span class="t" style="letter-spacing:0.12px;left:803.81px;width:600px;text-align:center;top:557px;font-size:12px;line-height:15px;transform:scaleY(1.04);transform-origin:50% 11px;">5</span>
<span class="t" style="letter-spacing:0.12px;left:1262.56px;width:600px;text-align:center;top:557px;font-size:12px;line-height:15px;transform:scaleY(1.04);transform-origin:50% 11px;">10а</span>
<span class="t" style="letter-spacing:0.12px;left:1375.06px;width:600px;text-align:center;top:557px;font-size:12px;line-height:15px;transform:scaleY(1.04);transform-origin:50% 11px;">11</span>
<span class="t" style="letter-spacing:0.24px;left:394.25px;top:574px;font-size:12px;line-height:15px;transform:scaleY(1.04);transform-origin:0 11px;">668954</span>
<span class="t" style="letter-spacing:0.12px;left:-75.38px;width:600px;text-align:right;top:574px;font-size:12px;line-height:15px;transform:scaleY(1.04);transform-origin:100% 11px;">1</span>
<span class="t" style="letter-spacing:0.11px;left:530px;top:574px;font-size:12px;line-height:15px;transform:scaleY(1.04);transform-origin:0 11px;">Товар2</span>
<span class="t" style="letter-spacing:0.12px;left:451.56px;width:600px;text-align:center;top:574px;font-size:12px;line-height:15px;transform:scaleY(1.04);transform-origin:50% 11px;">--</span>
<span class="t" style="letter-spacing:0.16px;left:788.5px;top:574px;font-size:12px;line-height:15px;transform:scaleY(1.04);transform-origin:0 11px;">796</span>
<span class="t" style="letter-spacing:0.12px;left:818px;top:574px;font-size:12px;line-height:15px;transform:scaleY(1.04);transform-origin:0 11px;">шт</span>
<span class="t" style="letter-spacing:-0.006px;left:349.99px;width:600px;text-align:right;top:574px;font-size:12px;line-height:15px;transform:scaleY(1.04);transform-origin:100% 11px;">1,000</span>
<span class="t" style="letter-spacing:0.04px;left:447.04px;width:600px;text-align:right;top:574px;font-size:12px;line-height:15px;transform:scaleY(1.04);transform-origin:100% 11px;">3,00</span>
<span class="t" style="letter-spacing:0.12px;left:1610.5px;top:574px;font-size:12px;line-height:15px;transform:scaleY(1.04);transform-origin:0 11px;">--</span>
<span class="t" style="letter-spacing:-0.07px;left:496.25px;top:606px;font-size:12px;line-height:15px;font-weight:bold;transform:scaleY(1.04);transform-origin:0 11px;">Всего к оплате (9)</span>
<span class="t" style="letter-spacing:-0.06px;left:515px;top:629.25px;font-size:13px;line-height:16px;transform:scaleY(1.06);transform-origin:0 12px;">Руководитель организации</span>
<span class="t" style="letter-spacing:-0.11px;left:515px;top:645px;font-size:13px;line-height:16px;transform:scaleY(1.06);transform-origin:0 12px;">или иное уполномоченное лицо</span>
<span class="t" style="letter-spacing:-0.08px;left:515px;top:675px;font-size:13px;line-height:16px;transform:scaleY(1.06);transform-origin:0 12px;">Индивидуальный предприниматель</span>
<span class="t" style="letter-spacing:-0.11px;left:515px;top:691.25px;font-size:13px;line-height:16px;transform:scaleY(1.06);transform-origin:0 12px;">или иное уполномоченное лицо</span>
<i style="left:747.5px;top:660px;width:153.25px;height:1px;background:#1a1a1a"></i>
<i style="left:914.25px;top:660px;width:202px;height:1px;background:#1a1a1a"></i>
<i style="left:1332px;top:660px;width:154.75px;height:1px;background:#1a1a1a"></i>
<i style="left:1495.5px;top:660px;width:193.5px;height:1px;background:#1a1a1a"></i>
<i style="left:747.5px;top:706px;width:153.25px;height:1px;background:#1a1a1a"></i>
<i style="left:914.25px;top:706px;width:202px;height:1px;background:#1a1a1a"></i>
<i style="left:1171.25px;top:706px;width:517.75px;height:1px;background:#1a1a1a"></i>
<span class="t" style="letter-spacing:0.12px;left:524.31px;width:600px;text-align:center;top:660.5px;font-size:10.67px;line-height:15px;transform:scaleY(0.95);transform-origin:50% 11px;">(подпись)</span>
<span class="t" style="letter-spacing:-0.02px;left:715.49px;width:600px;text-align:center;top:660.5px;font-size:10.67px;line-height:15px;transform:scaleY(0.95);transform-origin:50% 11px;">(ф.и.о.)</span>
<span class="t" style="letter-spacing:0.12px;left:524.31px;width:600px;text-align:center;top:706.25px;font-size:10.67px;line-height:15px;transform:scaleY(0.95);transform-origin:50% 11px;">(подпись)</span>
<span class="t" style="letter-spacing:-0.02px;left:715.49px;width:600px;text-align:center;top:706.25px;font-size:10.67px;line-height:15px;transform:scaleY(0.95);transform-origin:50% 11px;">(ф.и.о.)</span>
<span class="t" style="letter-spacing:0.12px;left:1109.31px;width:600px;text-align:center;top:660.5px;font-size:10.67px;line-height:15px;transform:scaleY(0.95);transform-origin:50% 11px;">(подпись)</span>
<span class="t" style="letter-spacing:-0.02px;left:1315.49px;width:600px;text-align:center;top:660.5px;font-size:10.67px;line-height:15px;transform:scaleY(0.95);transform-origin:50% 11px;">(ф.и.о.)</span>
<span class="t" style="letter-spacing:0.03px;left:1212.7px;top:706.25px;font-size:10.67px;line-height:15px;transform:scaleY(0.95);transform-origin:0 11px;">(реквизиты свидетельства о государственной  регистрации индивидуального предпринимателя</span>
<span class="t" style="letter-spacing:-0.12px;left:751.75px;top:691px;font-size:13px;line-height:16px;font-style:italic;transform:scaleY(1.06);transform-origin:0 12px;">электронная подпись</span>
<span class="t" style="left:918px;top:691px;font-size:13px;line-height:16px;transform:scaleY(1.06);transform-origin:0 12px;">- -.</span>
<span class="t" style="left:395.5px;top:728px;font-size:13px;line-height:16px;transform:scaleY(1.06);transform-origin:0 12px;">Основание передачи (сдачи) / получения (приемки)</span>
<span class="t" style="left:741.25px;top:728px;font-size:13px;line-height:16px;transform:scaleY(1.06);transform-origin:0 12px;">Договор на оказание услуг (РО-568/lkj от 11.08.2021)</span>
<i style="left:737.5px;top:743px;width:951.5px;height:1px;background:#1a1a1a"></i>
<span class="t" style="letter-spacing:0.02px;left:1149.5px;top:743px;font-size:10.67px;line-height:15px;transform:scaleY(0.95);transform-origin:0 11px;">(договор; доверенность и др.)</span>
<span class="t" style="letter-spacing:-0.09px;left:395px;top:758px;font-size:13px;line-height:16px;transform:scaleY(1.06);transform-origin:0 12px;">Данные о транспортировке и грузе</span>
<i style="left:623.75px;top:773px;width:1065.25px;height:1px;background:#1a1a1a"></i>
<span class="t" style="letter-spacing:0.04px;left:649.25px;top:773.5px;font-size:10.67px;line-height:15px;transform:scaleY(0.95);transform-origin:0 11px;">(транспортная накладная, поручение экспедитору, экспедиторская / складская расписка и др. / масса нетто/ брутто груза, если не приведены ссылки на транспортные документы, содержащие эти сведения)</span>
<span class="t" style="letter-spacing:0.01px;left:395.5px;top:794.75px;font-size:13px;line-height:16px;transform:scaleY(1.06);transform-origin:0 12px;">Товар (груз) передал / услуги, результаты работ, права сдал</span>
<span class="t" style="letter-spacing:-0.02px;left:1080.5px;top:794.75px;font-size:13px;line-height:16px;transform:scaleY(1.06);transform-origin:0 12px;">Товар (груз) получил / услуги, результаты работ, права принял</span>
<i style="left:1068px;top:793px;width:2px;height:60px;background:#1a1a1a"></i>
<i style="left:391px;top:827px;width:193.25px;height:1px;background:#1a1a1a"></i>
<i style="left:597px;top:827px;width:211.25px;height:1px;background:#1a1a1a"></i>
<i style="left:820px;top:827px;width:211.25px;height:1px;background:#1a1a1a"></i>
<i style="left:1077.5px;top:827px;width:192.5px;height:1px;background:#1a1a1a"></i>
<i style="left:1282px;top:827px;width:185.25px;height:1px;background:#1a1a1a"></i>
<i style="left:1479.25px;top:827px;width:209.75px;height:1px;background:#1a1a1a"></i>
<span class="t" style="letter-spacing:-0.11px;left:1035.75px;top:813px;font-size:13px;line-height:16px;transform:scaleY(1.06);transform-origin:0 12px;">[10]</span>
<span class="t" style="letter-spacing:-0.18px;left:1037px;top:842px;font-size:13px;line-height:16px;transform:scaleY(1.06);transform-origin:0 12px;">[11]</span>
<span class="t" style="letter-spacing:-0.09px;left:187.96px;width:600px;text-align:center;top:827px;font-size:10.67px;line-height:15px;transform:scaleY(0.95);transform-origin:50% 11px;">(должность)</span>
<span class="t" style="letter-spacing:0.12px;left:402.56px;width:600px;text-align:center;top:827px;font-size:10.67px;line-height:15px;transform:scaleY(0.95);transform-origin:50% 11px;">(подпись)</span>
<span class="t" style="letter-spacing:-0.02px;left:625.49px;width:600px;text-align:center;top:827px;font-size:10.67px;line-height:15px;transform:scaleY(0.95);transform-origin:50% 11px;">(ф.и.о.)</span>
<span class="t" style="letter-spacing:-0.09px;left:874.21px;width:600px;text-align:center;top:827px;font-size:10.67px;line-height:15px;transform:scaleY(0.95);transform-origin:50% 11px;">(должность)</span>
<span class="t" style="letter-spacing:0.12px;left:1074.31px;width:600px;text-align:center;top:827px;font-size:10.67px;line-height:15px;transform:scaleY(0.95);transform-origin:50% 11px;">(подпись)</span>
<span class="t" style="letter-spacing:-0.02px;left:1294.74px;width:600px;text-align:center;top:827px;font-size:10.67px;line-height:15px;transform:scaleY(0.95);transform-origin:50% 11px;">(ф.и.о.)</span>
<span class="t" style="letter-spacing:0.006px;left:395.5px;top:841.5px;font-size:13px;line-height:16px;transform:scaleY(1.06);transform-origin:0 12px;">Дата отгрузки (сдачи)</span>
<span class="t" style="letter-spacing:-0.12px;left:559.25px;top:841.5px;font-size:13px;line-height:16px;transform:scaleY(1.06);transform-origin:0 12px;">25 июля 2022 г.</span>
<span class="t" style="letter-spacing:0.05px;left:1080.5px;top:841.5px;font-size:13px;line-height:16px;transform:scaleY(1.06);transform-origin:0 12px;">Дата получения (приемки)</span>
</div></div>
<!-- overlays -->
<div style="left:608px;top:76px;width:274px;height:92px;background:#fff;border:1px solid #a9a9a9;box-shadow:2px 2.500px 1.500px rgba(0,0,0,.5)"></div>
<div style="left:610px;top:138px;width:270px;height:29px;background:#fbcc1e"></div>
<span class="t" style="letter-spacing:-0.14px;left:653px;top:84px;font-size:13px;line-height:17px;color:#4a4a4a;transform:scaleY(1.06);transform-origin:0 13px;">В формате <span style="letter-spacing:-.4px">PDF</span></span>
<span class="t" style="letter-spacing:-0.01px;left:653px;top:114px;font-size:13px;line-height:17px;color:#4a4a4a;transform:scaleY(1.06);transform-origin:0 13px;">Для предоставления в ФНС</span>
<span class="t" style="letter-spacing:-0.15px;left:653px;top:144px;font-size:13px;line-height:17px;color:#4a4a4a;transform:scaleY(1.06);transform-origin:0 13px;">Документооборот целиком</span>
<div style="left:598px;top:48px;width:132px;height:31.5px;border:2px solid #a5141d;border-radius:1px"></div>
<div style="left:628px;top:134px;width:221px;height:46px;border:2px solid #a5141d;border-radius:1px"></div>
<div style="left:725.5px;top:75.5px;width:21px;height:21px;background:#a5141d;border-radius:50%;box-shadow:0 0 0 .5px rgba(140,10,20,.6)"></div><span class="t" style="left:436px;width:600px;text-align:center;top:78.5px;font-size:12px;line-height:16px;font-weight:bold;color:#fff;font-family:"DejaVu Sans","Liberation Sans",sans-serif;">1</span>
<div style="left:844.5px;top:176.5px;width:21px;height:21px;background:#a5141d;border-radius:50%;box-shadow:0 0 0 .5px rgba(140,10,20,.6)"></div><span class="t" style="left:555px;width:600px;text-align:center;top:179.5px;font-size:12px;line-height:16px;font-weight:bold;color:#fff;font-family:"DejaVu Sans","Liberation Sans",sans-serif;">2</span>
<div style="left:1107px;top:495px;width:461px;height:163.5px;background:#fff;border:2px solid #f5d247"></div>
<svg class="a" style="left:1122px;top:511px" width="31" height="28" viewBox="0 0 31 28"><path d="M15.500 2.400L29.200 26H1.800z" fill="#f2d52e" stroke="#c9a722" stroke-width="1.100" stroke-linejoin="round"/><path d="M13.800 9.300h3.400l-.7 9.700h-2z" fill="#1f1f1f"/><circle cx="15.500" cy="22.300" r="1.900" fill="#1f1f1f"/></svg>
<span class="t" style="letter-spacing:-0.2px;left:1165.5px;top:507.5px;font-size:15px;line-height:20px;color:#3b3b3b;transform:scaleY(1.03);transform-origin:0 15px;">Резервное копирование</span>
<span class="t" style="letter-spacing:-0.08px;left:1165.5px;top:532.5px;font-size:13px;line-height:17px;color:#2c5ea6;transform:scaleY(1.06);transform-origin:0 13px;">Рекомендуется настроить резервное копирование</span>
<span class="t" style="letter-spacing:-0.27px;left:1165.5px;top:548.5px;font-size:13px;line-height:17px;color:#2c5ea6;transform:scaleY(1.06);transform-origin:0 13px;">информационной базы.</span>
<svg class="a" style="left:1540.500px;top:514.500px" width="8" height="8" viewBox="0 0 8 8"><path d="M.8 .8l6.400 6.400M7.200 .8l-6.400 6.400" stroke="#555" stroke-width="1" fill="none"/></svg>
<!-- footer -->
<div style="left:11px;top:894px;width:1711px;height:5px;background:#009646"></div>
<span class="t" style="letter-spacing:-0.04px;left:11.5px;top:907px;font-size:14px;line-height:18px;font-weight:bold;color:#333;">Сообщения:</span>
<svg class="a" style="left:1706px;top:914.500px" width="8" height="8" viewBox="0 0 8 8"><path d="M.8 .8l6.400 6.400M7.200 .8l-6.400 6.400" stroke="#555" stroke-width="1" fill="none"/></svg>
<div style="left:11px;top:937px;width:1711px;height:31px;background:#fff9dc;border:1px solid #a8a8a8"></div>
<div style="left:12.5px;top:939px;width:1708px;height:26px;background:#fce48c"></div>
<div style="left:23px;top:950.5px;width:11px;height:3px;background:#62b3a6"></div>
<span class="t" style="left:43.9px;top:944px;font-size:13px;line-height:17px;color:#3f3f3f;transform:scaleY(1.06);transform-origin:0 13px;"><span style="letter-spacing:0.08px">Для выгрузки необходимо </span><span style="letter-spacing:-0.1px">сохранить электронный документ</span></span>
<div style="left:0px;top:980px;width:1730px;height:3px;background:#1d2b36"></div>
<div style="left:305px;top:980px;width:46px;height:3px;background:#3b4752"></div>
</div>
</body></html>
